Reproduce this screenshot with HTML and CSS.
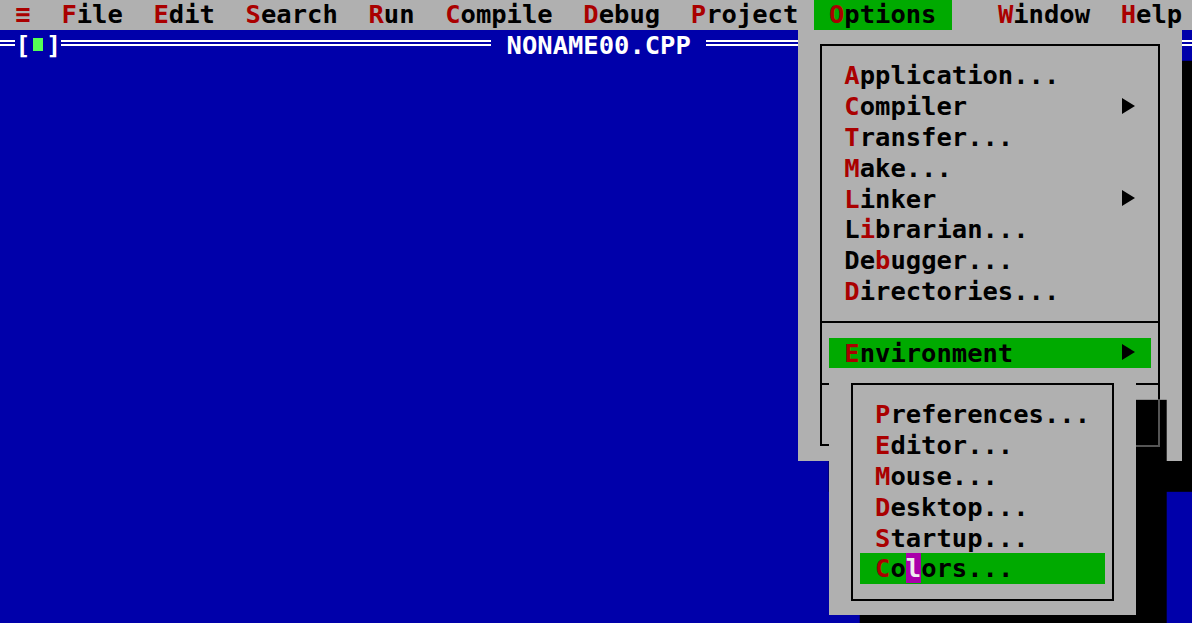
FILE: index.html
```html
<!DOCTYPE html>
<html lang="en">
<head>
<meta charset="utf-8">
<title>Turbo C++ - NONAME00.CPP</title>
<link rel="stylesheet" href="styles.css">
</head>
<body>
<div class="screen">
  <nav class="menubar">
    <span class="mi"><span class="hk">≡</span></span>
    <span class="mi"><span class="hk">F</span>ile</span>
    <span class="mi"><span class="hk">E</span>dit</span>
    <span class="mi"><span class="hk">S</span>earch</span>
    <span class="mi"><span class="hk">R</span>un</span>
    <span class="mi"><span class="hk">C</span>ompile</span>
    <span class="mi"><span class="hk">D</span>ebug</span>
    <span class="mi"><span class="hk">P</span>roject</span>
    <span class="mi active"><span class="hk">O</span>ptions</span>
    <span class="mi gap"><span class="hk">W</span>indow</span>
    <span class="mi"><span class="hk">H</span>elp</span>
  </nav>
  <main class="desktop">
    <div class="titlebar">
      <span class="dl a"></span>
      <span class="br">[</span><span class="closebox"></span><span class="br">]</span>
      <span class="dl b"></span>
      <span class="title">NONAME00.CPP</span>
      <span class="dl c"></span>
    </div>
  </main>

  <div class="menu options">
    <div class="frame">
      <div class="item"><span><span class="hk">A</span>pplication...</span></div>
      <div class="item"><span><span class="hk">C</span>ompiler</span><span class="arrow"></span></div>
      <div class="item"><span><span class="hk">T</span>ransfer...</span></div>
      <div class="item"><span><span class="hk">M</span>ake...</span></div>
      <div class="item"><span><span class="hk">L</span>inker</span><span class="arrow"></span></div>
      <div class="item"><span>L<span class="hk">i</span>brarian...</span></div>
      <div class="item"><span>De<span class="hk">b</span>ugger...</span></div>
      <div class="item"><span><span class="hk">D</span>irectories...</span></div>
      <div class="sep"></div>
      <div class="item sel"><span><span class="hk">E</span>nvironment</span><span class="arrow"></span></div>
      <div class="sep"></div>
      <div class="item"></div>
    </div>
  </div>

  <div class="menu env">
    <div class="frame">
      <div class="item"><span><span class="hk">P</span>references...</span></div>
      <div class="item"><span><span class="hk">E</span>ditor...</span></div>
      <div class="item"><span><span class="hk">M</span>ouse...</span></div>
      <div class="item"><span><span class="hk">D</span>esktop...</span></div>
      <div class="item"><span><span class="hk">S</span>tartup...</span></div>
      <div class="item sel"><span><span class="hk">C</span>o<span class="cursor">l</span>ors...</span></div>
    </div>
  </div>
</div>
</body>
</html>
```
FILE: styles.css
```css
:root {
  --rh: 30.82px;
  --gray: #b0b0b0;
  --blue: #0000aa;
  --green: #00aa00;
  --red: #aa0000;
  --shade: #555555;
}

html, body {
  margin: 0;
  height: 100%;
  overflow: hidden;
  background: var(--blue);
}

body {
  font-family: "DejaVu Sans Mono", "Liberation Mono", monospace;
  font-weight: bold;
  font-size: 25.5px;
  line-height: var(--rh);
}

.screen {
  position: relative;
  margin-top: -1.3px;
  height: calc(100% + 1.3px);
  display: flex;
  flex-direction: column;
}

/* ---------- menu bar ---------- */
.menubar {
  display: flex;
  flex: none;
  height: var(--rh);
  background: var(--gray);
  color: #000;
  white-space: pre;
}

.mi {
  padding: 0 1ch;
}

.mi.active {
  background: var(--green);
}

.mi.gap {
  margin-left: 2ch;
}

.hk {
  color: var(--red);
}

/* ---------- desktop / window ---------- */
.desktop {
  flex: 1;
  background: var(--blue);
}

.titlebar {
  display: flex;
  align-items: center;
  height: var(--rh);
  color: #fff;
  white-space: pre;
}

.dl {
  height: 2px;
  border-top: 2px solid #fff;
  border-bottom: 2px solid #fff;
  margin-top: -3px;
}

.dl.a { width: 1ch; }
.dl.b { width: 28ch; }
.dl.c { flex: 1; }

.br {
  width: 1ch;
}

.closebox {
  width: 1ch;
  height: var(--rh);
  display: flex;
  align-items: center;
  justify-content: center;
}

.closebox::before {
  content: "";
  width: 10px;
  height: 13px;
  background: #55ff55;
}

.title {
  padding: 0 1ch;
}

/* ---------- drop-down menus ---------- */
.menu {
  position: absolute;
  box-sizing: border-box;
  background: var(--gray);
  color: #000;
  padding: calc(var(--rh) / 2 - 1px) calc(1.5ch - 1px);
  box-shadow: 2ch var(--rh) 0 0 #000;
}

.frame {
  border: 2px solid #000;
  padding: calc(var(--rh) / 2 - 1px) 0;
}

.item {
  display: flex;
  height: var(--rh);
  margin: 0 calc(0.5ch - 1px);
  padding: 0 1ch;
  white-space: pre;
}

.item.sel {
  background: var(--green);
}

.arrow {
  margin-left: auto;
  width: 1ch;
  display: flex;
  align-items: center;
  justify-content: center;
}

.arrow::before {
  content: "";
  border-left: 13px solid #000;
  border-top: 8px solid transparent;
  border-bottom: 8px solid transparent;
  margin-top: -2px;
}

.sep {
  height: var(--rh);
  display: flex;
  align-items: center;
}

.sep::before {
  content: "";
  flex: 1;
  border-top: 2px solid #000;
}

.cursor {
  background: #aa00aa;
  color: #eeeeee;
}

.options {
  left: 52ch;
  top: var(--rh);
  width: 25ch;
}

.env {
  left: 54ch;
  top: calc(var(--rh) * 12);
  width: 20ch;
}

/* options-menu frame seen dimmed through the sub-menu shadow */
.env::after {
  content: "";
  position: absolute;
  box-sizing: border-box;
  left: 20ch;
  top: var(--rh);
  width: calc(1.5ch + 1px);
  height: calc(var(--rh) * 1.5 + 1px);
  border-right: 2px solid var(--shade);
  border-bottom: 2px solid var(--shade);
}
```
